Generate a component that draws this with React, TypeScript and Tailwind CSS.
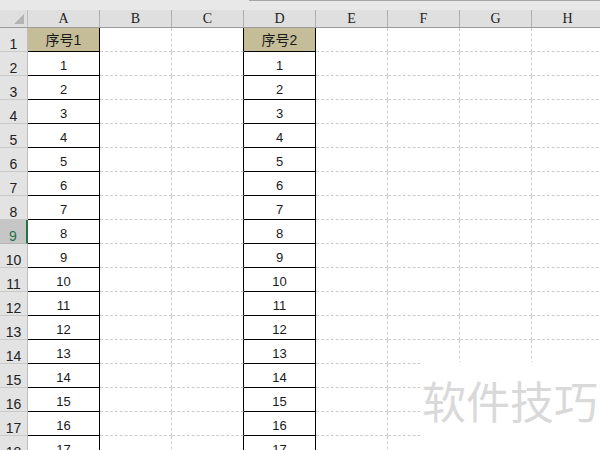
import React from "react";

const cols = ["A", "B", "C", "D", "E", "F", "G", "H"];
const rows = Array.from({ length: 18 }, (_, i) => i + 1);

function cellContent(r: number, c: number): string {
  if (c === 0 || c === 3) {
    if (r === 1) return c === 0 ? "序号1" : "序号2";
    return String(r - 1);
  }
  return "";
}

function Cell({ r, c }: { r: number; c: number }) {
  const text = cellContent(r, c);
  const isData = c === 0 || c === 3;
  const isHeader = isData && r === 1;
  const beforeData = c === 2;
  let cls =
    "w-[72px] shrink-0 h-[24px] border-r border-b flex justify-center leading-none text-[13px] text-[#1a1a1a] ";
  if (isData) {
    cls += "border-black ";
  } else if (beforeData) {
    cls += "border-b-[#cdcdcd] border-r-black [border-bottom-style:dashed] ";
  } else {
    cls += "border-[#cdcdcd] border-dashed ";
  }
  if (isHeader) {
    cls += "bg-[#c4bd97] items-start pt-[5px] text-[14px] ";
  } else {
    cls += "bg-white items-start pt-[7px] ";
  }
  return <div className={cls}>{text}</div>;
}

export default function App() {
  return (
    <div
      className="relative w-[600px] h-[450px] overflow-hidden bg-white"
      style={{ fontFamily: '"Liberation Sans", "Noto Sans CJK SC", sans-serif' }}
    >
      {/* top strip */}
      <div className="h-[10px] bg-[#e8e8e8] flex">
        <div className="w-[249px] shrink-0" />
        <div className="flex-1 border-t border-[#a6a6a6]" />
      </div>
      {/* column header row */}
      <div className="flex h-[18px] bg-[#dfdfdf] border-b border-[#9c9c9c]">
        <div className="w-[28px] shrink-0 relative border-r border-[#bdbdbd]">
          <div className="absolute right-[3px] bottom-[3px] w-0 h-0 border-l-[10px] border-l-transparent border-b-[10px] border-b-[#b3b3b3]" />
        </div>
        {cols.map((c) => (
          <div
            key={c}
            className="w-[72px] shrink-0 border-r border-[#b0b0b0] flex items-end justify-center pb-[1px] text-[14px] leading-none text-[#222]"
            style={{ fontFamily: '"Liberation Serif", "DejaVu Serif", serif' }}
          >
            {c}
          </div>
        ))}
      </div>
      {/* body */}
      {rows.map((r) => (
        <div key={r} className="flex">
          {r === 9 ? (
            <div className="w-[28px] shrink-0 h-[24px] bg-[#c6c6c6] border-b border-[#b5b5b5] border-r-2 border-r-[#217346] flex items-end justify-center text-[14px] leading-none text-[#217346]">
              {r}
            </div>
          ) : (
            <div className="w-[28px] shrink-0 h-[24px] bg-[#e3e3e3] border-b border-r border-b-[#c9c9c9] border-r-[#bdbdbd] flex items-end justify-center text-[14px] leading-none text-[#222]">
              {r}
            </div>
          )}
          {cols.map((_, c) => (
            <Cell key={c} r={r} c={c} />
          ))}
        </div>
      ))}
      {/* watermark */}
      <div className="absolute left-[420px] top-[362px] w-[180px] h-[88px] bg-white flex items-start justify-center pt-[16px]">
        <span
          className="text-[44px] leading-none text-[#d9d9d9]"
          style={{ fontFamily: '"Noto Sans CJK SC", sans-serif' }}
        >
          软件技巧
        </span>
      </div>
    </div>
  );
}
